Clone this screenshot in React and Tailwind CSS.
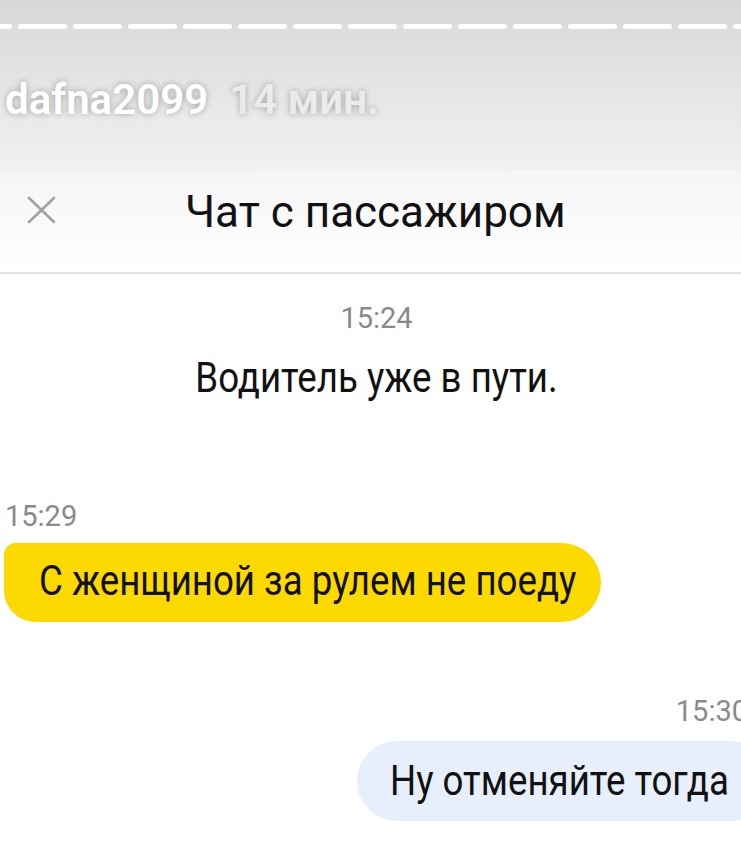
const dashes = Array.from({ length: 15 });

function TopBar() {
    return (
        <div className="h-[170px] bg-gradient-to-b from-[#d8d8d8] to-[#f1f1f1] overflow-hidden">
            <div className="flex gap-[6px] -ml-[37px] pt-[24px]">
                {dashes.map((_, i) => (
                    <div key={i} className="w-[49px] h-[5px] shrink-0 rounded-full bg-white" />
                ))}
            </div>
            <div className="flex items-baseline gap-[21px] pl-[5px] mt-[50px] text-[42px] leading-none font-semibold [text-shadow:0_0_6px_rgba(0,0,0,0.3)]">
                <span className="text-white">dafna2099</span>
                <span className="text-[#ebebeb]">14 мин.</span>
            </div>
        </div>
    );
}

function Header() {
    return (
        <div className="h-[104px] flex items-center bg-gradient-to-b from-[#f5f5f5] to-white border-b-2 border-[#e4e4e4]">
            <div className="w-[185px] pl-[27px] pb-[22px]">
                <svg width="29" height="28" viewBox="0 0 29 28" fill="none" stroke="#a2a2a2" strokeWidth="2.6" strokeLinecap="round">
                    <path d="M2 2 L27 26" />
                    <path d="M27 2 L2 26" />
                </svg>
            </div>
            <h1 className="text-[44px] leading-none text-[#111] pb-[18px]">Чат с пассажиром</h1>
        </div>
    );
}

export default function App() {
    return (
        <div className="w-[741px] h-[842px] overflow-hidden bg-white font-['Roboto',sans-serif]">
            <TopBar />
            <Header />

            <div className="flex flex-col">
                <div className="flex flex-col items-center pt-[30px] pl-[12px]">
                    <span className="text-[29px] leading-none text-[#8a8a8a]">15:24</span>
                    <span className="inline-block scale-x-[0.873] text-[42px] leading-none text-[#111] mt-[24px] whitespace-nowrap">
                        Водитель уже в пути.
                    </span>
                </div>

                <div className="flex flex-col items-start pl-[4px] mt-[103px]">
                    <span className="text-[29px] leading-none text-[#8a8a8a] pl-[1px]">15:29</span>
                    <div className="mt-[12px] w-[597px] h-[79px] flex items-center pl-[35px] bg-[#fcd900] rounded-[12px_40px_40px_32px] whitespace-nowrap">
                        <span className="inline-block scale-x-[0.873] origin-left text-[42px] leading-none text-[#111] -mt-[3px]">
                            С женщиной за рулем не поеду
                        </span>
                    </div>
                </div>

                <div className="flex flex-col items-end -mr-[29px] mt-[75px]">
                    <span className="text-[29px] leading-none text-[#8a8a8a] pr-[22px]">15:30</span>
                    <div className="mt-[15px] w-[413px] h-[80px] flex items-center pl-[33px] bg-[#e6effb] rounded-[40px] whitespace-nowrap">
                        <span className="inline-block scale-x-[0.873] origin-left text-[42px] leading-none text-[#111]">
                            Ну отменяйте тогда
                        </span>
                    </div>
                </div>
            </div>
        </div>
    );
}
